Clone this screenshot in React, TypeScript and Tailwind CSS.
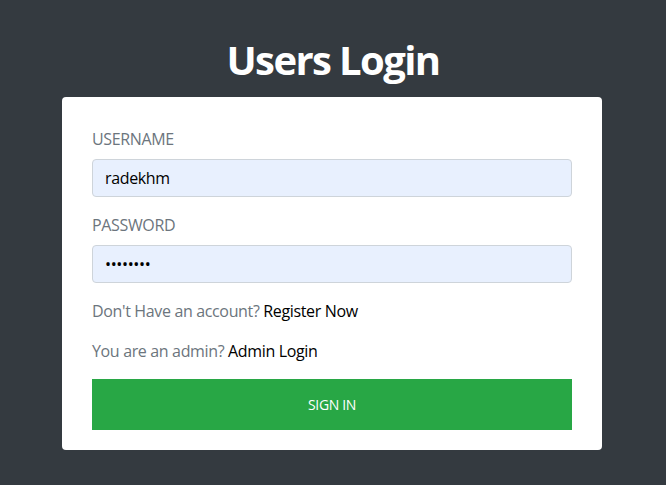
import React from 'react';

export default function App() {
  return (
    <div
      className="min-h-[485px] w-full bg-[#343a40] flex flex-col items-center"
      style={{ fontFamily: '"Open Sans", "Noto Sans", sans-serif' }}
    >
      <h1 className="mt-[36px] mb-[13px] text-[40px] leading-[48px] font-bold text-white tracking-[-1.6px]">
        Users Login
      </h1>

      <form
        className="w-[540px] mr-[2px] bg-white rounded-[4px] px-[30px] pt-[30px] pb-[20px] flex flex-col tracking-[-0.35px]"
        onSubmit={(e) => e.preventDefault()}
      >
        <label className="text-[16px] leading-[24px] text-[#6c757d] uppercase">Username</label>
        <input
          type="text"
          defaultValue="radekhm"
          className="mt-[8px] h-[38px] w-full px-[12px] bg-[#e8f0fe] border border-[#ced4da] rounded-[4px] text-[16px] text-black outline-none tracking-[-0.35px]"
        />

        <label className="mt-[16px] text-[16px] leading-[24px] text-[#6c757d] uppercase">Password</label>
        <input
          type="password"
          defaultValue="radekhm1"
          className="mt-[8px] h-[38px] w-full px-[12px] bg-[#e8f0fe] border border-[#ced4da] rounded-[4px] text-[16px] text-black outline-none"
        />

        <p className="mt-[16px] text-[16px] leading-[24px] text-[#6c757d]">
          Don't Have an account? <a href="#" className="text-black">Register Now</a>
        </p>

        <p className="mt-[16px] text-[16px] leading-[24px] text-[#6c757d]">
          You are an admin? <a href="#" className="text-black">Admin Login</a>
        </p>

        <button
          type="submit"
          className="mt-[16px] h-[51px] w-full bg-[#28a745] text-white text-[14px] uppercase"
        >
          Sign In
        </button>
      </form>
    </div>
  );
}
